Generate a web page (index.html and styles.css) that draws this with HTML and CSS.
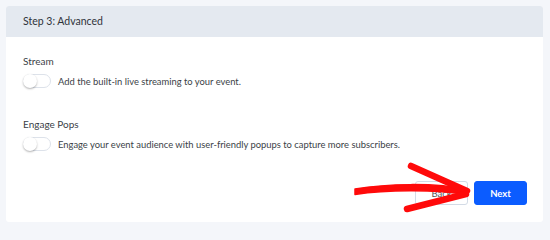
FILE: index.html
```html
<!DOCTYPE html>
<html>
<head>
<meta charset="utf-8">
<link rel="stylesheet" href="styles.css">
</head>
<body>
<div class="card">
  <div class="card-header">Step 3: Advanced</div>
  <div class="card-body">
    <div class="field">
      <div class="field-label">Stream</div>
      <div class="field-row">
        <span class="toggle"><span class="knob"></span></span>
        <span class="field-desc">Add the built-in live streaming to your event.</span>
      </div>
    </div>
    <div class="field">
      <div class="field-label">Engage Pops</div>
      <div class="field-row">
        <span class="toggle"><span class="knob"></span></span>
        <span class="field-desc">Engage your event audience with user-friendly popups to capture more subscribers.</span>
      </div>
    </div>
    <div class="actions">
      <button class="btn btn-back">Back</button>
      <button class="btn btn-next">Next</button>
      <svg class="arrow" width="140" height="60" viewBox="0 0 140 60">
        <path d="M15 32 C 45 27, 95 25, 128 33 L 127 38 C 95 32, 45 33, 15 37.5 Z" fill="#ff0a0a" stroke="#ff0a0a" stroke-width="1.5" stroke-linejoin="round"/>
        <path d="M71 9 L 127 34" fill="none" stroke="#ff0a0a" stroke-width="6.5" stroke-linecap="round"/>
        <path d="M67 52 L 126 37" fill="none" stroke="#ff0a0a" stroke-width="6.5" stroke-linecap="round"/>
      </svg>
    </div>
  </div>
</div>
</body>
</html>
```

FILE: styles.css
```css
html, body {
  margin: 0;
  padding: 0;
}
body {
  background: #f4f6fa;
  font-family: Lato, "Open Sans", sans-serif;
  color: #3b3f47;
  width: 550px;
  height: 229px;
  overflow: hidden;
}
.card {
  margin: 6px 0 0 6px;
  width: 537px;
  height: 216px;
  background: #ffffff;
  border-radius: 3px;
  display: flex;
  flex-direction: column;
  overflow: hidden;
}
.card-header {
  background: #e4e9f0;
  height: 31px;
  line-height: 31px;
  padding-left: 17px;
  font-size: 10.5px;
  color: #2f333a;
}
.card-body {
  flex: 1;
  padding: 18px 16px 19px 17px;
  display: flex;
  flex-direction: column;
}
.field {
  display: flex;
  flex-direction: column;
  gap: 7px;
  margin-bottom: 30px;
}
.field-label {
  font-size: 10px;
  line-height: 12px;
  color: #3b3f47;
}
.field-row {
  display: flex;
  align-items: center;
  gap: 7px;
  height: 14px;
}
.toggle {
  position: relative;
  width: 28px;
  height: 14px;
  border: 1px solid #dde2ea;
  border-radius: 8px;
  background: #fff;
  box-sizing: border-box;
  flex: none;
}
.knob {
  position: absolute;
  left: -1px;
  top: -1px;
  width: 14px;
  height: 14px;
  border-radius: 50%;
  background: #fff;
  box-shadow: 0 1px 2px rgba(0,0,0,0.3);
}
.field-desc {
  font-size: 9.4px;
  color: #3b3f47;
}
.actions {
  margin-top: auto;
  display: flex;
  justify-content: flex-end;
  gap: 6px;
  position: relative;
}
.btn {
  width: 53px;
  height: 24px;
  border-radius: 3px;
  font-family: Lato, sans-serif;
  font-size: 9.5px;
  padding: 0;
}
.btn-back {
  background: #fff;
  border: 1px solid #d3dbe6;
  color: #555;
}
.btn-next {
  background: #0b5cff;
  border: 1px solid #0b5cff;
  color: #fff;
  font-weight: 700;
}
.arrow {
  position: absolute;
  left: 317px;
  top: -24px;
}
```
